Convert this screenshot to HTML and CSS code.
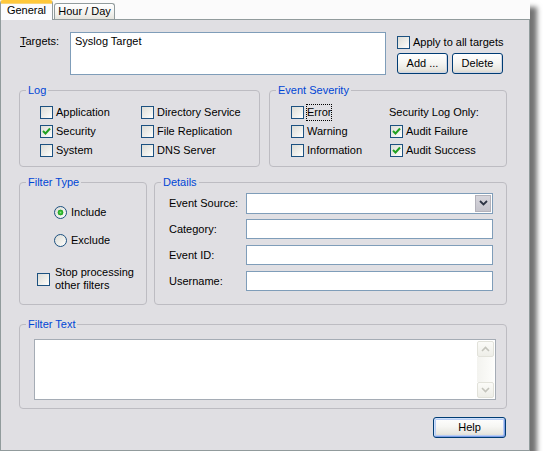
FILE: index.html
```html
<!DOCTYPE html>
<html>
<head>
<meta charset="utf-8">
<title>Filter</title>
<link rel="stylesheet" href="styles.css">
</head>
<body>
<div class="window">
  <div class="tabs">
    <div class="tab active">General</div>
    <div class="tab">Hour / Day</div>
  </div>
  <div class="panel">
    <div class="targets-row">
      <div class="targets-label"><u>T</u>argets:</div>
      <div class="targets-box">Syslog Target</div>
      <div class="targets-side">
        <div class="check apply"><span class="cb"></span><span>Apply to all targets</span></div>
        <div class="btn-row">
          <button class="btn btn-small">Add ...</button>
          <button class="btn btn-small">Delete</button>
        </div>
      </div>
    </div>

    <div class="row2">
      <fieldset class="group log">
        <legend>Log</legend>
        <div class="grid log-grid">
          <div class="check"><span class="cb"></span><span>Application</span></div>
          <div class="check"><span class="cb"></span><span>Directory Service</span></div>
          <div class="check"><span class="cb"><svg width="9" height="9" viewBox="0 0 9 9"><path d="M1 4 L3.5 6.5 L8 1.5" stroke="#21a121" stroke-width="2" fill="none"/></svg></span><span>Security</span></div>
          <div class="check"><span class="cb"></span><span>File Replication</span></div>
          <div class="check"><span class="cb"></span><span>System</span></div>
          <div class="check"><span class="cb"></span><span>DNS Server</span></div>
        </div>
      </fieldset>
      <fieldset class="group sev">
        <legend>Event Severity</legend>
        <div class="grid sev-grid">
          <div class="check"><span class="cb"></span><span class="focus">Error</span></div>
          <div class="plain">Security Log Only:</div>
          <div class="check"><span class="cb"></span><span>Warning</span></div>
          <div class="check col2"><span class="cb"><svg width="9" height="9" viewBox="0 0 9 9"><path d="M1 4 L3.5 6.5 L8 1.5" stroke="#21a121" stroke-width="2" fill="none"/></svg></span><span>Audit Failure</span></div>
          <div class="check"><span class="cb"></span><span>Information</span></div>
          <div class="check col2"><span class="cb"><svg width="9" height="9" viewBox="0 0 9 9"><path d="M1 4 L3.5 6.5 L8 1.5" stroke="#21a121" stroke-width="2" fill="none"/></svg></span><span>Audit Success</span></div>
        </div>
      </fieldset>
    </div>

    <div class="row3">
      <fieldset class="group ftype">
        <legend>Filter Type</legend>
        <div class="radio-col">
          <div class="check radio-row"><span class="rb on"></span><span>Include</span></div>
          <div class="check radio-row second"><span class="rb"></span><span>Exclude</span></div>
          <div class="check stop"><span class="cb"></span><span>Stop processing<br>other filters</span></div>
        </div>
      </fieldset>
      <fieldset class="group details">
        <legend>Details</legend>
        <div class="form">
          <div class="form-row"><span class="flabel">Event Source:</span>
            <div class="field select"><span class="sel-text"></span><span class="sel-btn"><svg width="9" height="6" viewBox="0 0 9 6"><path d="M1 1 L4.5 4.5 L8 1" stroke="#2d3444" stroke-width="1.8" fill="none"/></svg></span></div>
          </div>
          <div class="form-row"><span class="flabel">Category:</span><div class="field"></div></div>
          <div class="form-row"><span class="flabel">Event ID:</span><div class="field"></div></div>
          <div class="form-row"><span class="flabel">Username:</span><div class="field"></div></div>
        </div>
      </fieldset>
    </div>

    <fieldset class="group ftext">
      <legend>Filter Text</legend>
      <div class="textarea">
        <div class="scroll">
          <span class="sb-btn"><svg width="9" height="6" viewBox="0 0 9 6"><path d="M1 5 L4.5 1.5 L8 5" stroke="#c4c4bc" stroke-width="1.6" fill="none"/></svg></span>
          <span class="sb-track"></span>
          <span class="sb-btn"><svg width="9" height="6" viewBox="0 0 9 6"><path d="M1 1 L4.5 4.5 L8 1" stroke="#c4c4bc" stroke-width="1.6" fill="none"/></svg></span>
        </div>
      </div>
    </fieldset>

    <div class="help-row">
      <button class="btn btn-help">Help</button>
    </div>
  </div>
</div>
</body>
</html>
```

FILE: styles.css
```css
* { box-sizing: border-box; }
html, body { margin: 0; padding: 0; background: #ffffff; }
body { font: 11px/13px "Liberation Sans", Arial, sans-serif; color: #000; }

.window {
  width: 530px;
  height: 451px;
  display: flex;
  flex-direction: column;
  background: #fbfbfb;
  box-shadow: 7px 7px 5px rgba(0, 0, 0, 0.55);
}

.tabs {
  height: 19px;
  display: flex;
  align-items: flex-end;
  gap: 1px;
  position: relative;
  z-index: 2;
}
.tab {
  height: 16px;
  width: 61px;
  padding: 0;
  white-space: nowrap;
  border: 1px solid #919b9c;
  border-bottom: none;
  border-radius: 3px 3px 0 0;
  background: linear-gradient(#ffffff, #f3f3ef 60%, #e6e5de);
  line-height: 15px;
  text-align: center;
}
.tab.active {
  width: 53px;
  height: 20px;
  margin-bottom: -1px;
  background: #fcfcfe;
  border-top: 3px solid #ffc83c;
  box-shadow: inset 0 1px 0 #f8d57a;
  line-height: 15px;
}

.panel {
  flex: 1;
  border: 1px solid #919b9c;
  background: #e0dfe3;
  padding: 12px 22px 0 18px;
  display: flex;
  flex-direction: column;
}

/* targets */
.targets-row { display: flex; height: 43px; }
.targets-label { width: 50px; margin-left: 1px; padding-top: 3px; }
.targets-box {
  width: 316px;
  height: 43px;
  background: #fff;
  border: 1px solid #7f9db9;
  padding: 2px 4px;
}
.targets-side { margin-left: 11px; display: flex; flex-direction: column; }
.apply { margin-top: 4px; height: 13px; }
.btn-row { display: flex; gap: 4px; margin-top: 4px; }

.btn {
  font: inherit;
  color: #000;
  height: 21px;
  padding: 0;
  border: 1px solid #003c74;
  border-radius: 3px;
  background: linear-gradient(#ffffff 0%, #f6f6f3 45%, #e9e8e2 80%, #d8d5cc 100%);
  box-shadow: inset -1px -1px 0 #cfd6e4;
}
.btn-small { width: 51px; }

/* checks */
.check { display: flex; align-items: center; gap: 3px; white-space: nowrap; }
.cb {
  width: 13px;
  height: 13px;
  flex: none;
  border: 1px solid #1c5180;
  background: linear-gradient(135deg, #dcdcd7 0%, #f0f0ec 60%, #ffffff 100%);
  display: flex;
  align-items: center;
  justify-content: center;
}
.rb {
  width: 13px;
  height: 13px;
  flex: none;
  border-radius: 50%;
  border: 1px solid #1c5180;
  background: linear-gradient(135deg, #dcdcd7 0%, #f0f0ec 60%, #ffffff 100%);
}
.rb.on {
  background:
    radial-gradient(circle at 50% 50%, #8fe58c 0, #3cc13a 1.2px, #21a121 2.6px, rgba(33,161,33,0) 3.2px),
    linear-gradient(135deg, #dcdcd7 0%, #f0f0ec 60%, #ffffff 100%);
}
.focus { outline: 1px dotted #000; outline-offset: 0; padding: 1px 0; }

/* groups */
.group {
  margin: 0;
  padding: 0;
  min-width: 0;
  border: 1px solid #bdbcc2;
  border-radius: 4px;
}
.group > legend {
  margin-left: 6px;
  padding: 0 2px;
  line-height: 12px;
  height: 12px;
  color: #0046d5;
}

.row2 { display: flex; margin-top: 9px; gap: 9px; }
.log { width: 241px; height: 83px; flex: none; }
.sev { width: 238px; height: 83px; flex: none; }
.grid { display: grid; grid-auto-rows: 19px; align-items: center; padding-top: 7px; }
.log-grid { grid-template-columns: 101px auto; padding-left: 20px; }
.sev-grid { grid-template-columns: 98px auto; padding-left: 21px; }
.col2 { margin-left: 1px; }

.row3 { display: flex; margin-top: 9px; gap: 7px; }
.ftype { width: 128px; height: 129px; flex: none; }
.details { width: 353px; height: 129px; flex: none; }
.radio-col { display: flex; flex-direction: column; padding-top: 15px; }
.radio-row { height: 19px; padding-left: 34px; gap: 4px; }
.radio-row.second { margin-top: 9px; }
.stop { margin-top: 16px; padding-left: 17px; gap: 5px; align-items: center; }
.stop span:last-child { white-space: normal; line-height: 13px; }

.form { padding: 5px 0 0 14px; display: flex; flex-direction: column; gap: 6px; }
.form-row { display: flex; align-items: center; height: 20px; }
.flabel { width: 77px; }
.field {
  width: 247px;
  height: 20px;
  background: #fff;
  border: 1px solid #7f9db9;
}
.field.select { height: 21px; display: flex; justify-content: flex-end; padding: 1px; }
.sel-btn {
  width: 16px;
  height: 17px;
  background: linear-gradient(#d7d6dd, #c5c4cc);
  border: 1px solid #b3b2bb;
  display: flex;
  align-items: center;
  justify-content: center;
}

.panel > .ftext { width: 488px; height: 91px; margin-top: 13px; flex: none; }
.textarea {
  margin: 9px 0 0 14px;
  width: 462px;
  height: 61px;
  background: #fff;
  border: 1px solid #a5acb5;
  display: flex;
  justify-content: flex-end;
  padding: 1px;
}
.scroll { width: 17px; display: flex; flex-direction: column; }
.sb-btn {
  height: 16px;
  border: 1px solid #e2e2da;
  border-radius: 2px;
  background: linear-gradient(#fbfbf8, #eeeee8);
  display: flex;
  align-items: center;
  justify-content: center;
}
.sb-track { flex: 1; background: linear-gradient(90deg, #f3f3ef, #fdfdfb); }

.help-row { display: flex; justify-content: flex-end; margin-top: 8px; padding-right: 1px; }
.btn-help {
  width: 73px;
  box-shadow: inset 1px 1px 0 #cee0fb, inset -1px -1px 0 #7f9fe6, inset 0 0 0 2px #b8cdf4;
}
```
